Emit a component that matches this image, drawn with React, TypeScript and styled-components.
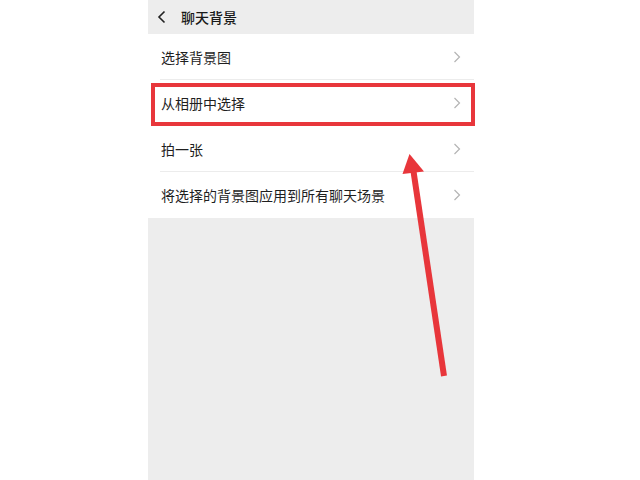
import React from "react";
import styled, { createGlobalStyle } from "styled-components";

const Global = createGlobalStyle`
  html, body { margin: 0; padding: 0; background: #ffffff; }
  body { font-family: "Noto Sans CJK SC", "Noto Sans", sans-serif; }
`;

const Stage = styled.div`
  position: relative;
  width: 640px;
  height: 480px;
  background: #ffffff;
  overflow: hidden;
`;

const Phone = styled.div`
  margin-left: 148px;
  width: 326px;
  height: 480px;
  background: #ededed;
  display: flex;
  flex-direction: column;
`;

const Header = styled.div`
  height: 34px;
  display: flex;
  align-items: center;
  padding-left: 9px;
  gap: 14px;
  box-sizing: border-box;
`;

const Title = styled.span`
  font-size: 14px;
  font-weight: 500;
  color: #191919;
  line-height: 1;
`;

const List = styled.div`
  background: #ffffff;
  display: flex;
  flex-direction: column;
`;

const Row = styled.div<{ $divider: boolean }>`
  height: 46px;
  display: flex;
  align-items: center;
  justify-content: space-between;
  padding: 0 13px 0 13px;
  box-sizing: border-box;
  position: relative;
  &::after {
    content: "";
    display: ${(p) => (p.$divider ? "block" : "none")};
    position: absolute;
    left: 12px;
    right: 0;
    bottom: 0;
    height: 1px;
    background: #ececec;
  }
`;

const Label = styled.span`
  font-size: 14px;
  color: #1f1f1f;
  line-height: 1;
`;

const Highlight = styled.div`
  position: absolute;
  left: 151px;
  top: 83px;
  width: 324px;
  height: 43px;
  border: 4.5px solid #e8363b;
  box-sizing: border-box;
`;

const ArrowSvg = styled.svg`
  position: absolute;
  left: 0;
  top: 0;
  pointer-events: none;
`;

const Chevron = () => (
  <svg width="8" height="12" viewBox="0 0 8 12">
    <path d="M1.5 1 L6.5 6 L1.5 11" fill="none" stroke="#b4b4b4" strokeWidth="1.2" />
  </svg>
);

const Back = () => (
  <svg width="10" height="14" viewBox="0 0 10 14">
    <path d="M7.5 1.5 L2 7 L7.5 12.5" fill="none" stroke="#222" strokeWidth="1.6" />
  </svg>
);

const items = ["选择背景图", "从相册中选择", "拍一张", "将选择的背景图应用到所有聊天场景"];

export default function App() {
  return (
    <Stage>
      <Global />
      <Phone>
        <Header>
          <Back />
          <Title>聊天背景</Title>
        </Header>
        <List>
          {items.map((t, i) => (
            <Row key={t} $divider={i < items.length - 1}>
              <Label>{t}</Label>
              <Chevron />
            </Row>
          ))}
        </List>
      </Phone>
      <Highlight />
      <ArrowSvg width="640" height="480" viewBox="0 0 640 480">
        <line x1="444" y1="376" x2="413" y2="168" stroke="#e8363b" strokeWidth="6" />
        <polygon points="409.5,154 424,171.5 402.5,174" fill="#e8363b" />
      </ArrowSvg>
    </Stage>
  );
}
